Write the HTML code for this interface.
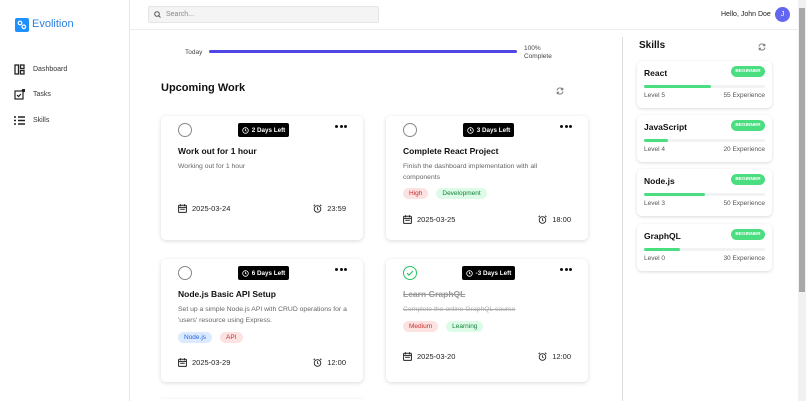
<!DOCTYPE html>
<html><head><meta charset="utf-8"><style>
*{box-sizing:border-box;margin:0;padding:0}
html,body{width:806px;height:401px;overflow:hidden}
body{background:#fff;font-family:"Liberation Sans",sans-serif;color:#111;position:relative}
.a{position:absolute}
.side{left:0;top:0;width:130px;height:401px;border-right:1px solid #e5e7eb}
.hdr{left:130px;top:0;width:668px;height:30px;border-bottom:1px solid #eee}
.card{position:absolute;width:202px;background:#fff;border-radius:5px;box-shadow:0 1px 4px rgba(0,0,0,.15)}
.chk{position:absolute;left:17px;top:7px;width:14px;height:14px;border:1px solid #888;border-radius:50%}
.badge{position:absolute;left:77px;top:7px;width:51px;height:14px;background:#000;color:#fff;font-size:6.3px;font-weight:bold;border-radius:2px;display:flex;align-items:center;justify-content:center;gap:3px}
.dots{position:absolute;right:16px;top:9px;display:flex;gap:1.5px}
.dots i{width:3px;height:3px;background:#111;border-radius:50%}
.t{position:absolute;left:17px;top:30px;font-size:8.5px;font-weight:bold}
.d{position:absolute;left:17px;top:46px;width:172px;font-size:6.8px;color:#666;line-height:10.5px}
.tags{position:absolute;left:17px;display:flex;gap:8px}
.tag{font-size:6.5px;padding:2px 6px;border-radius:8px}
.ft{position:absolute;left:17px;right:17px;display:flex;justify-content:space-between;font-size:7.5px;color:#222;align-items:center}
.ft span{display:flex;align-items:center;gap:5px}
.sk{position:absolute;left:637px;width:135px;height:47px;border-radius:5px;box-shadow:0 1px 3px rgba(0,0,0,.15);background:#fff}
.sk b{position:absolute;left:7px;top:7px;font-size:8.5px}
.sk i{position:absolute;right:7px;top:5px;width:34px;height:11px;line-height:11px;text-align:center;background:#4ade80;color:#fff;font-style:normal;font-size:4.8px;font-weight:bold;border-radius:6px}
.bar{position:absolute;left:7px;right:7px;top:24px;height:3px;background:#f1f2f4;border-radius:2px}
.bar div{height:3px;background:#4ade80;border-radius:2px}
.lv{position:absolute;left:7px;right:7px;top:31px;display:flex;justify-content:space-between;font-size:6.5px;color:#555}
.nav{position:absolute;left:14px;display:flex;align-items:center;gap:8px;font-size:7px;color:#333}
</style></head><body>
<svg style="display:none"><symbol id="cal" viewBox="0 0 9 9"><rect x="0.6" y="1.3" width="7.8" height="7.1" rx="0.8" fill="none" stroke="#222" stroke-width="1"/><path d="M0.6 3.4h7.8M2.5 0.3v2M6.5 0.3v2M2.2 5.2h4.6" stroke="#222" stroke-width="1"/></symbol>
<symbol id="alm" viewBox="0 0 9 9"><circle cx="4.5" cy="5" r="3.3" fill="none" stroke="#222" stroke-width="0.9"/><path d="M4.5 3.3v1.9l1 .8M0.6 2L2 0.7M8.4 2L7 0.7" stroke="#222" stroke-width="0.9" fill="none"/></symbol>
<symbol id="clk" viewBox="0 0 8 8"><circle cx="4" cy="4" r="3.2" fill="none" stroke="#fff" stroke-width="0.9"/><path d="M4 2.2V4l1.2.8" stroke="#fff" stroke-width="0.9" fill="none"/></symbol></svg>
<div class="a side">
 <div class="a" style="left:15px;top:18px;width:14px;height:14px;background:#1e90ff;border-radius:2px"></div>
 <svg class="a" style="left:17px;top:20px" width="10" height="10" viewBox="0 0 10 10" fill="none" stroke="#fff" stroke-width="1.2"><circle cx="3" cy="3" r="1.8"/><circle cx="6.8" cy="6.8" r="1.8"/></svg>
 <div class="a" style="left:32px;top:18px;font-size:11px;color:#2b7fe0">Evolition</div>
 <div class="nav" style="top:64px"><svg width="11" height="11" viewBox="0 0 11 11" fill="none" stroke="#222" stroke-width="1.3"><rect x="1" y="1" width="3.5" height="9"/><rect x="6.5" y="1" width="3.5" height="3.5"/><rect x="6.5" y="6.5" width="3.5" height="3.5"/></svg>Dashboard</div>
 <div class="nav" style="top:89px"><svg width="11" height="11" viewBox="0 0 11 11" fill="none" stroke="#222" stroke-width="1.2"><rect x="1" y="2" width="8" height="8"/><path d="M3 6l1.5 1.5L7 5"/><circle cx="9.5" cy="1.5" r="1.2" fill="#222"/></svg>Tasks</div>
 <div class="nav" style="top:115px"><svg width="11" height="11" viewBox="0 0 11 11" stroke="#222" stroke-width="1.6"><path d="M0 2h2M4 2h7M0 5.5h2M4 5.5h7M0 9h2M4 9h7"/></svg>Skills</div>
</div>
<div class="a hdr">
 <div class="a" style="left:18px;top:6px;width:231px;height:17px;background:#f4f4f5;border:1px solid #e5e5e5;border-radius:2px;font-size:7px;color:#888;padding:4px 0 0 17px">Search...</div>
 <svg class="a" style="left:24px;top:11px" width="7" height="7" viewBox="0 0 7 7" fill="none" stroke="#555"><circle cx="3" cy="3" r="2.3"/><path d="M4.7 4.7L6.5 6.5"/></svg>
 <div class="a" style="left:591px;top:11px;font-size:7px;color:#222">Hello, John Doe</div>
 <div class="a" style="left:645px;top:7px;width:15px;height:15px;border-radius:50%;background:#6366f1;color:#fff;font-size:7px;text-align:center;line-height:15px">J</div>
</div>
<div class="a" style="left:798px;top:0;width:8px;height:401px;background:#f1f1f1"></div>
<div class="a" style="left:799px;top:8px;width:6px;height:284px;background:#a8a8a8"></div>
<div class="a" style="left:622px;top:37px;width:1px;height:364px;background:#ddd"></div>
<div class="a" style="left:185px;top:49px;font-size:6.5px;color:#444">Today</div>
<div class="a" style="left:209px;top:50px;width:308px;height:3px;background:#4f46e5;border-radius:2px"></div>
<div class="a" style="left:524px;top:45px;font-size:6.5px;color:#444;line-height:8px">100%<br>Complete</div>
<div class="a" style="left:161px;top:82px;font-size:11px;font-weight:bold">Upcoming Work</div>
<svg class="a" style="left:556px;top:87px" width="8" height="8" viewBox="0 0 8 8" fill="none" stroke="#777" stroke-width="0.9"><path d="M1 3.5A3 3 0 0 1 6.6 2.5M7 4.5A3 3 0 0 1 1.4 5.5M6.8 0.8v2h-2M1.2 7.2v-2h2"/></svg>

<div class="card" style="left:161px;top:116px;height:124px">
 <div class="chk"></div><div class="badge"><svg width="7" height="7"><use href="#clk"/></svg>2 Days Left</div><div class="dots"><i></i><i></i><i></i></div>
 <div class="t">Work out for 1 hour</div><div class="d">Working out for 1 hour</div>
 <div class="ft" style="top:88px"><span><svg width="9" height="9"><use href="#cal"/></svg>2025-03-24</span><span><svg width="9" height="9"><use href="#alm"/></svg>23:59</span></div>
</div>
<div class="card" style="left:386px;top:116px;height:124px">
 <div class="chk"></div><div class="badge"><svg width="7" height="7"><use href="#clk"/></svg>3 Days Left</div><div class="dots"><i></i><i></i><i></i></div>
 <div class="t">Complete React Project</div><div class="d">Finish the dashboard implementation with all components</div>
 <div class="tags" style="top:72px"><span class="tag" style="background:#fde2e2;color:#c53030">High</span><span class="tag" style="background:#dcfce7;color:#15803d">Development</span></div>
 <div class="ft" style="top:99px"><span><svg width="9" height="9"><use href="#cal"/></svg>2025-03-25</span><span><svg width="9" height="9"><use href="#alm"/></svg>18:00</span></div>
</div>
<div class="card" style="left:161px;top:259px;height:123px">
 <div class="chk"></div><div class="badge"><svg width="7" height="7"><use href="#clk"/></svg>6 Days Left</div><div class="dots"><i></i><i></i><i></i></div>
 <div class="t">Node.js Basic API Setup</div><div class="d">Set up a simple Node.js API with CRUD operations for a 'users' resource using Express.</div>
 <div class="tags" style="top:73px"><span class="tag" style="background:#dbeafe;color:#2563eb">Node.js</span><span class="tag" style="background:#fde2e2;color:#c53030">API</span></div>
 <div class="ft" style="top:99px"><span><svg width="9" height="9"><use href="#cal"/></svg>2025-03-29</span><span><svg width="9" height="9"><use href="#alm"/></svg>12:00</span></div>
</div>
<div class="card" style="left:386px;top:259px;height:123px">
 <div class="chk" style="border-color:#22c55e"></div>
 <svg class="a" style="left:20px;top:10px" width="8" height="8" viewBox="0 0 8 8" fill="none" stroke="#22c55e" stroke-width="1.2"><path d="M1 4.2l2 2L7 2"/></svg>
 <div class="badge" style="width:53px;left:76px"><svg width="7" height="7"><use href="#clk"/></svg>-3 Days Left</div><div class="dots"><i></i><i></i><i></i></div>
 <div class="t" style="color:#999;text-decoration:line-through">Learn GraphQL</div><div class="d" style="color:#aaa;text-decoration:line-through">Complete the online GraphQL course</div>
 <div class="tags" style="top:62px"><span class="tag" style="background:#fde2e2;color:#c53030">Medium</span><span class="tag" style="background:#dcfce7;color:#15803d">Learning</span></div>
 <div class="ft" style="top:93px"><span><svg width="9" height="9"><use href="#cal"/></svg>2025-03-20</span><span><svg width="9" height="9"><use href="#alm"/></svg>12:00</span></div>
</div>
<div class="card" style="left:161px;top:399px;height:2px;border-radius:5px 5px 0 0"></div>

<div class="a" style="left:639px;top:40px;font-size:10px;font-weight:bold">Skills</div>
<svg class="a" style="left:758px;top:43px" width="8" height="8" viewBox="0 0 8 8" fill="none" stroke="#777" stroke-width="0.9"><path d="M1 3.5A3 3 0 0 1 6.6 2.5M7 4.5A3 3 0 0 1 1.4 5.5M6.8 0.8v2h-2M1.2 7.2v-2h2"/></svg>
<div class="sk" style="top:61px"><b>React</b><i>BEGINNER</i><div class="bar"><div style="width:55%"></div></div><div class="lv"><span>Level 5</span><span>55 Experience</span></div></div>
<div class="sk" style="top:115px"><b>JavaScript</b><i>BEGINNER</i><div class="bar"><div style="width:20%"></div></div><div class="lv"><span>Level 4</span><span>20 Experience</span></div></div>
<div class="sk" style="top:169px"><b>Node.js</b><i>BEGINNER</i><div class="bar"><div style="width:50%"></div></div><div class="lv"><span>Level 3</span><span>50 Experience</span></div></div>
<div class="sk" style="top:224px"><b>GraphQL</b><i>BEGINNER</i><div class="bar"><div style="width:30%"></div></div><div class="lv"><span>Level 0</span><span>30 Experience</span></div></div>
</body></html>
